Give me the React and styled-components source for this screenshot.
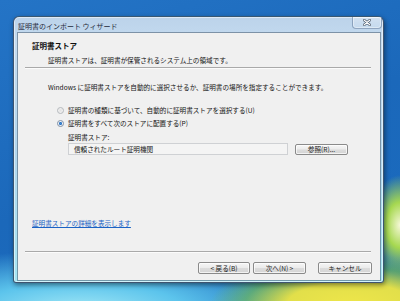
import styled, { createGlobalStyle } from 'styled-components';

const GlobalStyle = createGlobalStyle`
  html, body {
    margin: 0;
    padding: 0;
  }
  body {
    font-family: "Noto Sans CJK JP", "Noto Sans", sans-serif;
    color: #141414;
  }
`;

const Desktop = styled.div`
  width: 400px;
  height: 301px;
  overflow: hidden;
  box-sizing: border-box;
  padding: 16px 0 0 13px;
  background:
    radial-gradient(ellipse 140px 50px at 350px 305px, #eee64a 0%, #e2df4a 45%, rgba(120, 190, 70, 0.6) 75%, rgba(60, 170, 80, 0) 100%),
    radial-gradient(ellipse 30px 50px at 400px 225px, #f6f8d8 0%, #a6d850 45%, rgba(40, 140, 200, 0) 100%),
    radial-gradient(ellipse 230px 60px at 80px 310px, #a2e8f6 0%, #5cc4ec 45%, rgba(30, 110, 200, 0) 100%),
    linear-gradient(160deg, #2474c6 0%, #1b68ba 50%, #1a6cc0 100%);
`;

const Window = styled.div`
  width: 371px;
  height: 267px;
  box-sizing: border-box;
  display: flex;
  flex-direction: column;
  border: 1px solid rgba(20, 40, 70, 0.75);
  border-radius: 6px 6px 3px 3px;
  background: linear-gradient(180deg, #bcd3ea 0%, #c4dbf0 10%, #b2d6ee 50%, #a6e6f4 100%);
  box-shadow: 1px 2px 5px rgba(0, 0, 0, 0.45), inset 0 0 0 1px rgba(255, 255, 255, 0.5);
`;

const TitleBar = styled.div`
  height: 16px;
  display: flex;
  align-items: flex-start;
  justify-content: space-between;
  padding-left: 4px;
`;

const Caption = styled.span`
  font-size: 7px;
  line-height: 8px;
  margin-top: 5px;
  color: #1e2a3a;
  white-space: nowrap;
`;

const CloseButton = styled.div`
  width: 30px;
  height: 12px;
  margin-right: 1px;
  box-sizing: border-box;
  border: 1px solid rgba(60, 90, 130, 0.45);
  border-top: none;
  border-radius: 0 0 4px 4px;
  background: linear-gradient(180deg, rgba(255, 255, 255, 0.35), rgba(255, 255, 255, 0.1));
  box-shadow: inset 0 0 0 1px rgba(255, 255, 255, 0.4);
  display: flex;
  align-items: center;
  justify-content: center;
`;

const Client = styled.div`
  flex: 1;
  margin: 0 3px 2px 4px;
  background: #f0f0f0;
  box-shadow: 0 0 0 1px rgba(70, 90, 110, 0.55);
  display: flex;
  flex-direction: column;
`;

const Header = styled.div`
  height: 34px;
  box-sizing: border-box;
  padding: 8px 0 0 14px;
`;

const HeaderTitle = styled.div`
  font-size: 7.5px;
  line-height: 10px;
  font-weight: bold;
  color: #111;
`;

const HeaderSub = styled.div`
  font-size: 6.6px;
  line-height: 10px;
  margin: 4px 0 0 16px;
  white-space: nowrap;
`;

const Separator = styled.div`
  height: 1px;
  margin: 0 9px 0 7px;
  background: #a9a9a9;
  border-bottom: 1px solid #fbfbfb;
`;

const Body = styled.div`
  padding-left: 30px;
  flex: 1;
  display: flex;
  flex-direction: column;
`;

const Text = styled.div`
  font-size: 6.6px;
  line-height: 10px;
  white-space: nowrap;
  margin-top: ${(p) => p.$mt || 0}px;
`;

const Options = styled.div`
  margin-top: 13px;
  padding-left: 9px;
  display: flex;
  flex-direction: column;
  gap: 3px;
`;

const OptionRow = styled.label`
  display: flex;
  align-items: center;
  gap: 4px;
  height: 10px;
  font-size: 6.6px;
  white-space: nowrap;
`;

const Radio = styled.span`
  width: 7px;
  height: 7px;
  box-sizing: border-box;
  border-radius: 50%;
  border: 1px solid ${(p) => (p.$checked ? '#8090a4' : '#b4b8bc')};
  background: ${(p) =>
    p.$checked
      ? 'radial-gradient(circle, #3d8fd8 0%, #2a70c0 35%, #e8eef4 50%, #f8f8f8 100%)'
      : 'radial-gradient(circle, #e2e2e2 0%, #f6f6f6 100%)'};
`;

const StoreField = styled.div`
  margin: 4px 0 0 20px;
  display: flex;
  flex-direction: column;
`;

const StoreRow = styled.div`
  display: flex;
  align-items: center;
  gap: 7px;
  margin-top: 1px;
`;

const TextBox = styled.div`
  width: 220px;
  height: 12px;
  box-sizing: border-box;
  border: 1px solid #cfd1d4;
  background: #f4f4f4;
  font-size: 6.6px;
  line-height: 10px;
  padding-left: 5px;
  white-space: nowrap;
`;

const Button = styled.div`
  width: ${(p) => p.$w}px;
  height: ${(p) => p.$h || 12}px;
  box-sizing: border-box;
  border: 1px solid #8a8a8a;
  border-radius: 2px;
  background: linear-gradient(180deg, #f6f6f6 0%, #ebebeb 48%, #dcdcdc 52%, #d4d4d4 100%);
  box-shadow: inset 0 0 0 1px rgba(255, 255, 255, 0.7);
  display: flex;
  align-items: center;
  justify-content: center;
  font-size: 6.6px;
  white-space: nowrap;
  color: #222;
`;

const Link = styled.a`
  display: block;
  margin: 63px 0 0 -16px;
  font-size: 6.6px;
  line-height: 10px;
  color: #1a62c4;
  text-decoration: underline;
  white-space: nowrap;
`;

const Footer = styled.div`
  display: flex;
  flex-direction: column;
  padding-bottom: 6px;
`;

const ButtonRow = styled.div`
  display: flex;
  justify-content: flex-end;
  gap: 3px;
  margin: 9px 8px 0 0;
`;

const CancelGap = styled.div`
  width: 6px;
`;

export default function App() {
  return (
    <>
      <GlobalStyle />
      <Desktop>
        <Window>
          <TitleBar>
            <Caption>証明書のインポート ウィザード</Caption>
            <CloseButton>
              <svg width="8" height="7" viewBox="0 0 8 7">
                <path d="M1 1 L7 6 M7 1 L1 6" stroke="#3b4a5c" strokeWidth="2.4" strokeLinecap="round" />
                <path d="M1 1 L7 6 M7 1 L1 6" stroke="#ffffff" strokeWidth="1.2" strokeLinecap="round" />
              </svg>
            </CloseButton>
          </TitleBar>
          <Client>
            <Header>
              <HeaderTitle>証明書ストア</HeaderTitle>
              <HeaderSub>証明書ストアは、証明書が保管されるシステム上の領域です。</HeaderSub>
            </Header>
            <Separator />
            <Body>
              <Text $mt={13}>
                Windows に証明書ストアを自動的に選択させるか、証明書の場所を指定することができます。
              </Text>
              <Options>
                <OptionRow>
                  <Radio />
                  証明書の種類に基づいて、自動的に証明書ストアを選択する(U)
                </OptionRow>
                <OptionRow>
                  <Radio $checked />
                  証明書をすべて次のストアに配置する(P)
                </OptionRow>
              </Options>
              <StoreField>
                <Text>証明書ストア:</Text>
                <StoreRow>
                  <TextBox>信頼されたルート証明機関</TextBox>
                  <Button $w={53} $h={11}>参照(R)...</Button>
                </StoreRow>
              </StoreField>
              <Link>証明書ストアの詳細を表示します</Link>
            </Body>
            <Footer>
              <Separator />
              <ButtonRow>
                <Button $w={52}>&lt; 戻る(B)</Button>
                <Button $w={53}>次へ(N) &gt;</Button>
                <CancelGap />
                <Button $w={54}>キャンセル</Button>
              </ButtonRow>
            </Footer>
          </Client>
        </Window>
      </Desktop>
    </>
  );
}
